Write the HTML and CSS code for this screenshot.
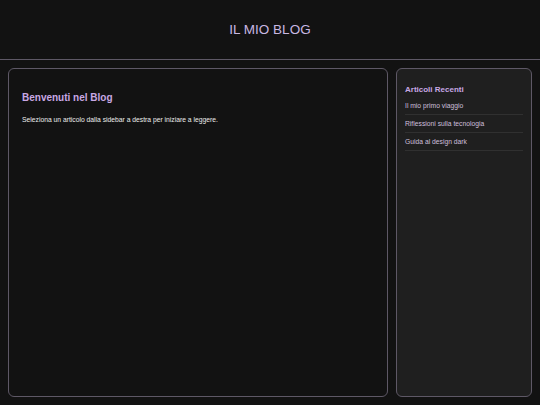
FILE: index.html
```html
<!DOCTYPE html>
<html lang="it">
<head>
<meta charset="utf-8">
<title>Il mio blog</title>
<link rel="stylesheet" href="styles.css">
</head>
<body>
<header class="site-header">
  <h1 class="site-title">IL MIO BLOG</h1>
</header>
<main class="layout">
  <article class="content">
    <h2 class="content-title">Benvenuti nel Blog</h2>
    <p class="content-text">Seleziona un articolo dalla sidebar a destra per iniziare a leggere.</p>
  </article>
  <aside class="sidebar">
    <h3 class="sidebar-title">Articoli Recenti</h3>
    <ul class="post-list">
      <li class="post-item"><a class="post-link" href="#">Il mio primo viaggio</a></li>
      <li class="post-item"><a class="post-link" href="#">Riflessioni sulla tecnologia</a></li>
      <li class="post-item"><a class="post-link" href="#">Guida al design dark</a></li>
    </ul>
  </aside>
</main>
</body>
</html>
```

FILE: styles.css
```css
* { box-sizing: border-box; }
html, body {
  margin: 0;
  height: 100%;
}
body {
  background: #121212;
  color: #e8e8e8;
  font-family: "Liberation Sans", Arial, sans-serif;
  display: flex;
  flex-direction: column;
}
.site-header {
  height: 60px;
  border-bottom: 1px solid #5e5866;
  display: flex;
  align-items: center;
  justify-content: center;
}
.site-title {
  margin: 0;
  font-size: 13.5px;
  font-weight: normal;
  color: #c9b8e2;
}
.layout {
  flex: 1;
  display: grid;
  grid-template-columns: 1fr 136px;
  gap: 8px;
  padding: 8px;
}
.content {
  border: 1px solid #5e5866;
  border-radius: 6px;
  background: #121212;
  padding: 23px 13px;
}
.content-title {
  margin: 0 0 13px;
  font-size: 10px;
  font-weight: bold;
  color: #c8a8e4;
}
.content-text {
  margin: 0;
  font-size: 6.75px;
  color: #ececec;
}
.sidebar {
  border: 1px solid #5e5866;
  border-radius: 6px;
  background: #1f1f1f;
  padding: 16px 8px;
}
.sidebar-title {
  margin: 0 0 3px;
  font-size: 8px;
  font-weight: bold;
  color: #c8a8e4;
}
.post-list {
  list-style: none;
  margin: 0;
  padding: 0;
}
.post-item {
  height: 18px;
  display: flex;
  align-items: center;
  border-bottom: 1px solid #303030;
}
.post-link {
  font-size: 6.75px;
  color: #cdbfdc;
  text-decoration: none;
}
```
